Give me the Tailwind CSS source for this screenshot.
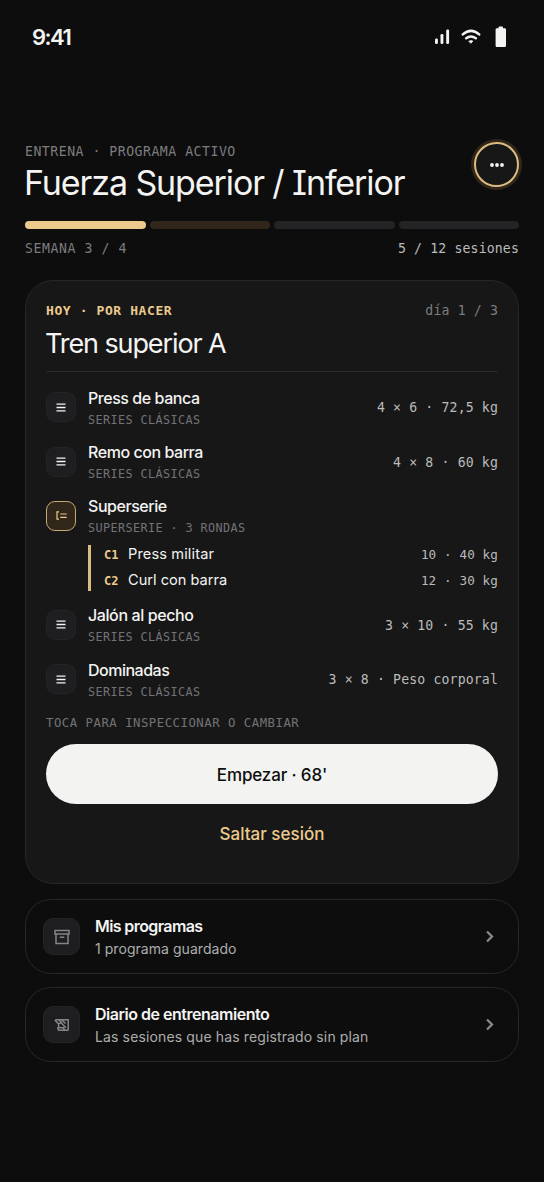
<!DOCTYPE html>
<html lang="es">
<head>
<meta charset="utf-8">
<title>Entrena</title>
<script src="https://cdn.jsdelivr.net/npm/@tailwindcss/browser@4"></script>
</head>
<body class="bg-[#0d0d0e]">
<div class="flex h-[1182px] w-[544px] flex-col overflow-hidden bg-[#0d0d0e] px-[25px] font-['Inter',sans-serif] text-[#f4f4f2]">
  <!-- Status bar -->
  <div class="flex h-[74px] items-center justify-between pr-[12px] pl-[7px]">
    <span class="text-[22px] leading-none font-semibold tracking-[-1.500px]">9:41</span>
    <div class="flex items-center text-[#f4f4f2]">
      <svg class="mr-[11px]" width="15" height="16" viewBox="0 0 15 16" fill="currentColor"><rect x="0" y="9.500" width="2.900" height="5.500" rx="1.300"/><rect x="5.500" y="5" width="2.900" height="10" rx="1.300"/><rect x="11.200" y="0.500" width="2.900" height="14.500" rx="1.300"/></svg>
      <svg class="mr-[14px]" width="20" height="16" viewBox="0 0 20 16" fill="none" stroke="currentColor" stroke-width="2.500" stroke-linecap="round"><path d="M1.800 5.400Q10-1.600 18.200 5.400M5.200 9.300Q10 5.600 14.800 9.300"/><path d="M8.200 12.100Q10 11.200 11.800 12.100L10 14Z" fill="currentColor" stroke-width="1" stroke-linejoin="round"/></svg>
      <svg width="12" height="22" viewBox="0 0 12 22" fill="currentColor"><path d="M3.500 2.200V1.200Q3.500.5 4.200.5H7.300Q8 .5 8 1.200V2.200H9.800Q11 2.200 11 3.400V19.800Q11 21 9.800 21H1.800Q.6 21 .6 19.800V3.400Q.6 2.200 1.800 2.200Z"/></svg>
    </div>
  </div>

  <!-- Program header -->
  <header class="mt-[66px] flex h-[62px] justify-between">
    <div>
      <p class="h-[23px] font-['DejaVu_Sans_Mono',monospace] text-[13.200px] leading-[23px] tracking-[0.490px] text-[#7c7c7f]">ENTRENA · PROGRAMA ACTIVO</p>
      <h1 class="-ml-[1px] text-[34px] leading-[40px] font-normal tracking-[-1.100px] whitespace-nowrap">Fuerza Superior / <span class="[font-feature-settings:'cv08']">I</span>nferior</h1>
    </div>
    <button class="mt-[2px] flex size-[45px] items-center justify-center rounded-full border-2 border-[#dcbb80] bg-[#171718] shadow-[0_0_0_3px_#30261a]" aria-label="Opciones">
      <svg width="14" height="4" viewBox="0 0 14 4" fill="#f4f4f2"><circle cx="2" cy="2" r="1.900"/><circle cx="7" cy="2" r="1.900"/><circle cx="12" cy="2" r="1.900"/></svg>
    </button>
  </header>
  <div class="mt-[19px] grid h-[8px] grid-cols-4 gap-[4px]">
    <div class="rounded-full bg-[#ecca8c]"></div><div class="rounded-full bg-[#302619]"></div><div class="rounded-full bg-[#242426]"></div><div class="rounded-full bg-[#242426]"></div>
  </div>
  <div class="mt-[9px] flex h-[21px] items-center justify-between font-['DejaVu_Sans_Mono',monospace] text-[13.200px]">
    <span class="tracking-[0.570px] text-[#7c7c7f]">SEMANA 3 / 4</span>
    <span class="tracking-[0.130px] text-[#bbbbba]">5 / 12 sesiones</span>
  </div>

  <!-- Today's session -->
  <section class="mt-[21px] flex h-[604px] shrink-0 flex-col rounded-[28px] border border-[#272729] bg-[#171718] px-[20px] pt-[19px]">
    <div class="flex h-[22px] items-center justify-between font-['DejaVu_Sans_Mono',monospace] text-[13.200px]">
      <span class="text-[13px] font-bold tracking-[0.590px] text-[#ecca8c]">HOY · POR HACER</span>
      <span class="tracking-[0.130px] text-[#7c7c7f]">día 1 / 3</span>
    </div>
    <h2 class="-indent-[1px] flex h-[50px] items-center border-b border-[#2a2a2c] pb-[6px] text-[27px] leading-[36px] tracking-[-1.100px]">Tren superior A</h2>

    <div class="mt-[9px] flex h-[54.400px] items-center">
      <div class="-mt-[2px] flex size-[30px] items-center justify-center rounded-[9px] border border-[#242426] bg-[#1e1e20]"><svg width="10" height="9" viewBox="0 0 10 9" stroke="#f4f4f2" stroke-width="1.300"><path d="M.5 1.200h9M.5 4.500h9M.5 7.800h9"/></svg></div>
      <div class="ml-[12px] flex-1 pt-px"><p class="text-[16px] leading-[22px] font-medium tracking-[-0.450px]">Press de banca</p><p class="font-['DejaVu_Sans_Mono',monospace] text-[11.800px] leading-[22px] tracking-[0.400px] text-[#737376]">SERIES CLÁSICAS</p></div>
      <span class="font-['DejaVu_Sans_Mono',monospace] text-[13.200px] tracking-[0.130px] text-[#bbbbba]">4 × 6 · 72,5 kg</span>
    </div>
    <div class="flex h-[54.400px] items-center">
      <div class="-mt-[2px] flex size-[30px] items-center justify-center rounded-[9px] border border-[#242426] bg-[#1e1e20]"><svg width="10" height="9" viewBox="0 0 10 9" stroke="#f4f4f2" stroke-width="1.300"><path d="M.5 1.200h9M.5 4.500h9M.5 7.800h9"/></svg></div>
      <div class="ml-[12px] flex-1 pt-px"><p class="text-[16px] leading-[22px] font-medium tracking-[-0.450px]">Remo con barra</p><p class="font-['DejaVu_Sans_Mono',monospace] text-[11.800px] leading-[22px] tracking-[0.400px] text-[#737376]">SERIES CLÁSICAS</p></div>
      <span class="font-['DejaVu_Sans_Mono',monospace] text-[13.200px] tracking-[0.130px] text-[#bbbbba]">4 × 8 · 60 kg</span>
    </div>
    <div class="flex h-[54.400px] items-center">
      <div class="-mt-[2px] flex size-[30px] items-center justify-center rounded-[9px] border-[1.500px] border-[#c6a974] bg-[#302619]"><svg width="11" height="9" viewBox="0 0 11 9" fill="none" stroke="#ecca8c" stroke-width="1.200"><path d="M3 .8H1V8.200H3M4.200 3h6.500M4.200 6.300h6.500"/></svg></div>
      <div class="ml-[12px] flex-1 pt-px"><p class="text-[16px] leading-[22px] font-medium tracking-[-0.450px]">Superserie</p><p class="font-['DejaVu_Sans_Mono',monospace] text-[11.800px] leading-[22px] tracking-[0.400px] text-[#737376]">SUPERSERIE · 3 RONDAS</p></div>
    </div>
    <div class="mt-px ml-[42px] flex h-[46px] flex-col justify-between border-l-[3px] border-[#dcbb80] pl-[13px]">
      <div class="flex h-[20px] items-center"><span class="w-[24px] font-['DejaVu_Sans_Mono',monospace] text-[12px] font-bold text-[#ecca8c]">C1</span><span class="flex-1 text-[14.600px] tracking-[0.120px]">Press militar</span><span class="font-['DejaVu_Sans_Mono',monospace] text-[12.600px] tracking-[0.130px] text-[#bbbbba]">10 · 40 kg</span></div>
      <div class="flex h-[20px] items-center"><span class="w-[24px] font-['DejaVu_Sans_Mono',monospace] text-[12px] font-bold text-[#ecca8c]">C2</span><span class="flex-1 text-[14.600px]">Curl con barra</span><span class="font-['DejaVu_Sans_Mono',monospace] text-[12.600px] tracking-[0.130px] text-[#bbbbba]">12 · 30 kg</span></div>
    </div>
    <div class="mt-[7.500px] flex h-[54.400px] items-center">
      <div class="-mt-[2px] flex size-[30px] items-center justify-center rounded-[9px] border border-[#242426] bg-[#1e1e20]"><svg width="10" height="9" viewBox="0 0 10 9" stroke="#f4f4f2" stroke-width="1.300"><path d="M.5 1.200h9M.5 4.500h9M.5 7.800h9"/></svg></div>
      <div class="ml-[12px] flex-1 pt-px"><p class="text-[16px] leading-[22px] font-medium tracking-[-0.400px]">Jalón al pecho</p><p class="font-['DejaVu_Sans_Mono',monospace] text-[11.800px] leading-[22px] tracking-[0.400px] text-[#737376]">SERIES CLÁSICAS</p></div>
      <span class="font-['DejaVu_Sans_Mono',monospace] text-[13.200px] tracking-[0.130px] text-[#bbbbba]">3 × 10 · 55 kg</span>
    </div>
    <div class="flex h-[54.400px] items-center">
      <div class="-mt-[2px] flex size-[30px] items-center justify-center rounded-[9px] border border-[#242426] bg-[#1e1e20]"><svg width="10" height="9" viewBox="0 0 10 9" stroke="#f4f4f2" stroke-width="1.300"><path d="M.5 1.200h9M.5 4.500h9M.5 7.800h9"/></svg></div>
      <div class="ml-[12px] flex-1 pt-px"><p class="text-[16px] leading-[22px] font-medium tracking-[-0.500px]">Dominadas</p><p class="font-['DejaVu_Sans_Mono',monospace] text-[11.800px] leading-[22px] tracking-[0.400px] text-[#737376]">SERIES CLÁSICAS</p></div>
      <span class="font-['DejaVu_Sans_Mono',monospace] text-[13.200px] tracking-[0.130px] text-[#bbbbba]">3 × 8 · Peso corporal</span>
    </div>
    <p class="mt-[6px] h-[20px] shrink-0 font-['DejaVu_Sans_Mono',monospace] text-[12.300px] leading-[20px] tracking-[0.510px] text-[#737376]">TOCA PARA INSPECCIONAR O CAMBIAR</p>
    <button class="mt-[10.500px] h-[60px] shrink-0 rounded-full bg-[#f3f3f1] pt-[3px] text-[17px] font-medium tracking-[-0.150px] text-[#0d0d0e]">Empezar · 68'</button>
    <button class="mt-[9px] h-[44px] shrink-0 text-[17px] font-medium text-[#ecca8c]">Saltar sesión</button>
  </section>

  <!-- Links -->
  <nav class="mt-[15px] flex flex-col gap-[13px]">
    <a class="flex h-[75px] items-center rounded-[26px] border border-[#272729] pr-[24px] pl-[17px]">
      <span class="flex size-[37px] items-center justify-center rounded-[10px] border border-[#242426] bg-[#1e1e20]"><svg width="16" height="16" viewBox="0 0 16 16" fill="none" stroke="#858587" stroke-width="1.500"><path d="M1 1.500h14v3.500H1zM2 5v9.500h12V5M5.700 8.200h4.600"/></svg></span>
      <span class="ml-[15px] flex-1 pt-px"><span class="block text-[16px] leading-[23px] font-semibold tracking-[-0.600px]">Mis programas</span><span class="block text-[14px] leading-[22px] tracking-[0.050px] text-[#adadac]">1 programa guardado</span></span>
      <svg width="9" height="13" viewBox="0 0 9 13" fill="none" stroke="#8b8b8c" stroke-width="2.200"><path d="M2 1.500l5 5-5 5"/></svg>
    </a>
    <a class="flex h-[75px] items-center rounded-[26px] border border-[#272729] pr-[24px] pl-[17px]">
      <span class="flex size-[37px] items-center justify-center rounded-[10px] border border-[#242426] bg-[#1e1e20]"><svg width="16" height="14" viewBox="0 0 16 14" fill="none" stroke="#858587" stroke-width="1.500"><path d="M1.500 1.700H14.200V11.500Q14.200 12.300 13.400 12.300H5.200Q3.900 12.300 3.900 10.800V9.800H9.500Q9.800 12.200 11.700 12.200M4.600 6V9.800M.8 2L4.300 5.600 7.200 4.800 11.800 9.700M5 2L8 5M8 2L11.500 5.500"/></svg></span>
      <span class="ml-[15px] flex-1 pt-px"><span class="block text-[16px] leading-[23px] font-semibold tracking-[-0.480px]">Diario de entrenamiento</span><span class="block text-[14px] leading-[22px] tracking-[0.130px] text-[#adadac]">Las sesiones que has registrado sin plan</span></span>
      <svg width="9" height="13" viewBox="0 0 9 13" fill="none" stroke="#8b8b8c" stroke-width="2.200"><path d="M2 1.500l5 5-5 5"/></svg>
    </a>
  </nav>
</div>
</body>
</html>
